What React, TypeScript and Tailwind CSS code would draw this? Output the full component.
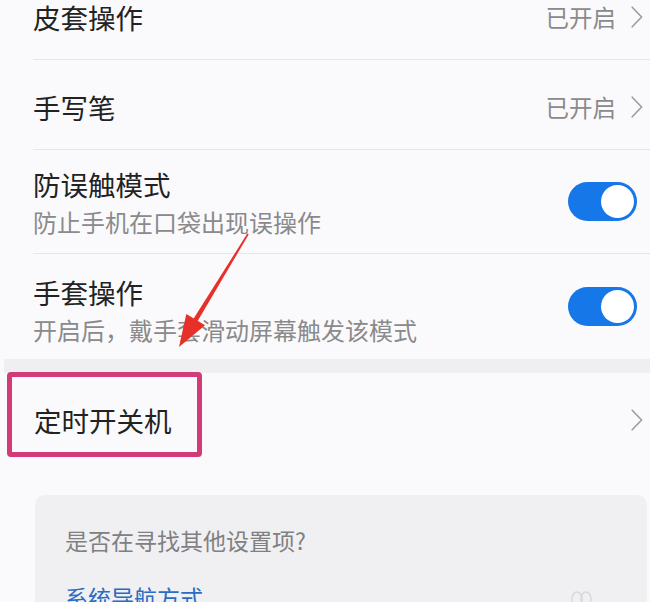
import React from "react";

const Chevron = () => (
  <svg width="12" height="22" viewBox="0 0 12 22" fill="none">
    <path d="M1.2 1.2 L10.6 11 L1.2 20.8" stroke="#9c9c9e" strokeWidth="1.6" strokeLinecap="round" strokeLinejoin="round" />
  </svg>
);

const Toggle = () => (
  <div className="relative w-[69px] h-[39px] rounded-full bg-[#1677e8]">
    <div className="absolute right-[3px] top-[3px] w-[33px] h-[33px] rounded-full bg-white" />
  </div>
);

export default function App() {
  return (
    <div className="relative w-[650px] h-[602px] overflow-hidden bg-[#fafafc] font-['Noto_Sans_CJK_SC',sans-serif]">
      {/* Row 1 */}
      <div className="h-[60px] ml-[33px] border-b border-[#e6e6e8] flex items-start justify-between pr-[7px]">
        <span className="text-[27.5px] leading-[34px] text-[#222222]">皮套操作</span>
        <div className="flex items-center h-[34px] gap-[15px]">
          <span className="text-[23.5px] leading-[34px] text-[#8a8a8c]">已开启</span>
          <Chevron />
        </div>
      </div>
      {/* Row 2 */}
      <div className="h-[90px] ml-[33px] border-b border-[#e6e6e8] flex items-start justify-between pr-[7px] pt-[30px]">
        <span className="text-[27.5px] leading-[34px] text-[#222222]">手写笔</span>
        <div className="flex items-center h-[34px] gap-[15px]">
          <span className="text-[23.5px] leading-[34px] text-[#8a8a8c]">已开启</span>
          <Chevron />
        </div>
      </div>
      {/* Row 3 */}
      <div className="h-[104px] ml-[33px] border-b border-[#e6e6e8] flex items-center justify-between pr-[13px]">
        <div className="flex flex-col self-start pt-[17px]">
          <span className="text-[27.5px] leading-[34px] text-[#222222]">防误触模式</span>
          <span className="mt-[4px] text-[24px] leading-[34px] text-[#8a8a8c]">防止手机在口袋出现误操作</span>
        </div>
        <Toggle />
      </div>
      {/* Row 4 */}
      <div className="h-[105px] ml-[33px] flex items-center justify-between pr-[13px]">
        <div className="flex flex-col self-start pt-[21px]">
          <span className="text-[27.5px] leading-[34px] text-[#222222]">手套操作</span>
          <span className="mt-[4px] text-[24px] leading-[34px] text-[#8a8a8c]">开启后，戴手套滑动屏幕触发该模式</span>
        </div>
        <Toggle />
      </div>
      {/* Band */}
      <div className="h-[14px] ml-[4px] bg-[#efeff1]" />
      {/* Row 5 */}
      <div className="h-[122px] ml-[34px] flex items-start justify-between pr-[7px] pt-[30px]">
        <span className="text-[27.5px] leading-[34px] text-[#222222]">定时开关机</span>
        <div className="flex items-center h-[34px]">
          <Chevron />
        </div>
      </div>
      {/* Card */}
      <div className="ml-[35px] mr-[3px] h-[140px] rounded-[10px] bg-[#f0f0f2] pl-[30px] pt-[28px]">
        <div className="text-[23px] leading-[34px] text-[#808082]">是否在寻找其他设置项?</div>
        <div className="mt-[23px] text-[23px] leading-[34px] text-[#2a6cc2]">系统导航方式</div>
      </div>

      {/* Pink highlight box */}
      <div className="absolute left-[7px] top-[372px] w-[195px] h-[85px] border-[5px] border-[#d23a78] rounded-[4px]" />

      {/* Small logo shapes at bottom */}
      <svg className="absolute left-[570px] top-[590px]" width="24" height="14" viewBox="0 0 24 14" fill="none">
        <ellipse cx="7" cy="9" rx="5" ry="7" stroke="#d8d8da" strokeWidth="1.5" />
        <ellipse cx="16" cy="9" rx="5" ry="7" stroke="#d8d8da" strokeWidth="1.5" />
      </svg>

      {/* Red arrow */}
      <svg className="absolute left-0 top-0 pointer-events-none" width="650" height="602" viewBox="0 0 650 602">
        <polygon points="248.7,234.4 247.3,233.6 190.5,323.5 194.7,326.1" fill="#e8302a" />
        <polygon points="179,347 186.3,313.9 205.1,325.3" fill="#e8302a" />
      </svg>
    </div>
  );
}
